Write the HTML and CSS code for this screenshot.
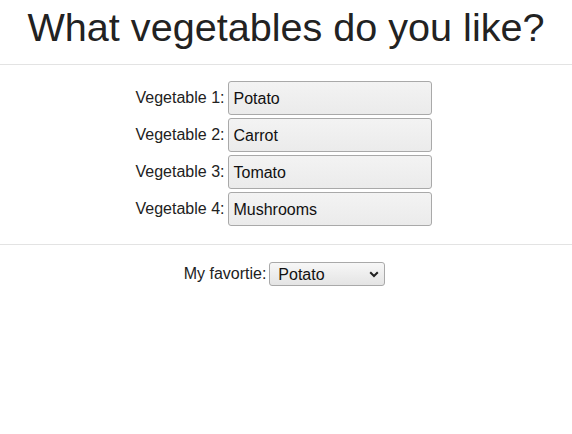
FILE: index.html
```html
<!DOCTYPE html>
<html>
<head>
<meta charset="utf-8">
<link rel="stylesheet" href="styles.css">
</head>
<body>
<h1 class="title">What vegetables do you like?</h1>
<hr class="rule">
<div class="list">
  <div class="row"><label class="lbl">Vegetable 1:</label><input class="field" value="Potato"></div>
  <div class="row"><label class="lbl">Vegetable 2:</label><input class="field" value="Carrot"></div>
  <div class="row"><label class="lbl">Vegetable 3:</label><input class="field" value="Tomato"></div>
  <div class="row"><label class="lbl">Vegetable 4:</label><input class="field" value="Mushrooms"></div>
</div>
<hr class="rule">
<div class="fav">
  <label class="lbl">My favortie:</label><span class="selwrap">
    <select class="sel"><option>Potato</option><option>Carrot</option><option>Tomato</option><option>Mushrooms</option></select>
    <svg class="chev" width="10" height="7" viewBox="0 0 10 7"><path d="M1.2 1.2 L5 5 L8.8 1.2" fill="none" stroke="#222" stroke-width="2"/></svg>
  </span>
</div>
</body>
</html>
```
FILE: styles.css
```css
html, body {
  margin: 0;
  padding: 0;
  background: #fff;
}
body {
  font-family: "Liberation Sans", Arial, sans-serif;
  color: #222;
  font-size: 16px;
}
.title {
  margin: 0;
  padding: 4px 0 14px 0;
  font-size: 39.6px;
  font-weight: normal;
  text-align: center;
  line-height: 46px;
  color: #222;
}
.rule {
  margin: 0;
  border: 0;
  border-top: 1px solid #e3e3e3;
  height: 0;
}
.list {
  padding-top: 16px;
  padding-bottom: 18px;
  display: flex;
  flex-direction: column;
  gap: 3px;
}
.row {
  text-align: center;
  padding-right: 4px;
}
.lbl {
  color: #222;
  font-size: 16px;
}
.row .lbl {
  vertical-align: middle;
  margin-right: 4px;
}
.field {
  box-sizing: border-box;
  width: 204px;
  height: 34px;
  padding: 1px 4px 0 4px;
  margin: 0;
  font-family: "Liberation Sans", Arial, sans-serif;
  font-size: 16px;
  color: #111;
  border: 1px solid #a9a9a9;
  border-radius: 3px;
  background: linear-gradient(#f3f3f3, #ebebeb);
  vertical-align: middle;
}
.fav {
  text-align: center;
  padding-top: 17px;
  padding-right: 3px;
}
.fav .lbl {
  vertical-align: middle;
}
.selwrap {
  position: relative;
  display: inline-block;
  vertical-align: middle;
  margin-left: 3px;
}
.sel {
  -webkit-appearance: none;
  appearance: none;
  box-sizing: border-box;
  width: 116px;
  height: 24px;
  margin: 0;
  padding: 0 0 0 8px;
  font-family: "Liberation Sans", Arial, sans-serif;
  font-size: 16px;
  color: #111;
  border: 1px solid #a9a9a9;
  border-radius: 3px;
  background: linear-gradient(#f7f7f7, #e4e4e4);
  display: block;
}
.chev {
  position: absolute;
  right: 6px;
  top: 9px;
  pointer-events: none;
}
```
